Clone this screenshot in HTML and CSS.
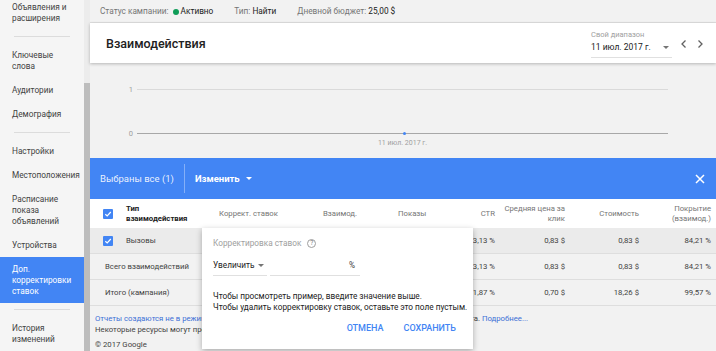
FILE: index.html
```html
<!DOCTYPE html>
<html lang="ru">
<head>
    <meta charset="UTF-8">
    <meta name="viewport" content="width=device-width, initial-scale=1.0">
    <title>Взаимодействия</title>
    <link rel="stylesheet" href="styles.css">
</head>
<body>
<div class="page">
    <nav class="side">
        <ul class="menu">
            <li>Объявления и расширения</li>
            <li class="sep"></li>
            <li>Ключевые слова</li>
            <li>Аудитории</li>
            <li>Демография</li>
            <li class="sep"></li>
            <li>Настройки</li>
            <li>Местоположения</li>
            <li>Расписание показа объявлений</li>
            <li>Устройства</li>
            <li class="on">Доп. корректировки ставок</li>
            <li class="sep"></li>
            <li>История изменений</li>
        </ul>
    </nav>
    <div class="scroll"><div class="thumb"></div></div>

    <main class="main">
        <div class="status">
            <span>Статус кампании: <i class="dot"></i><b>Активно</b></span>
            <span>Тип: <b>Найти</b></span>
            <span>Дневной бюджет: <b>25,00 $</b></span>
        </div>

        <div class="head">
            <h1>Взаимодействия</h1>
            <div class="range">
                <div class="pick">
                    <div class="pick-lbl">Свой диапазон</div>
                    <div class="pick-val">11 июл. 2017 г. <span class="caret"></span></div>
                </div>
                <svg class="nav" width="8" height="10" viewBox="0 0 8 10"><path d="M5.5 1.5 2 5l3.5 3.5" fill="none" stroke="#616161" stroke-width="1.3"/></svg>
                <svg class="nav" width="8" height="10" viewBox="0 0 8 10"><path d="M2.5 1.5 6 5 2.5 8.5" fill="none" stroke="#616161" stroke-width="1.3"/></svg>
            </div>
        </div>

        <div class="chart">
            <div class="crow">
                <span class="clbl">1</span>
                <div class="cline"></div>
            </div>
            <div class="crow zero">
                <span class="clbl">0</span>
                <div class="cline"></div>
            </div>
            <div class="crow">
                <span class="clbl"></span>
                <div class="cdate">11 июл. 2017 г.</div>
            </div>
        </div>

        <div class="selbar">
            <span class="selall">Выбраны все (1)</span>
            <span class="vline"></span>
            <span class="edit">Изменить <span class="caret white"></span></span>
            <svg class="close" width="10" height="10" viewBox="0 0 10 10"><path d="M1 1l8 8M9 1 1 9" stroke="#fff" stroke-width="1.5"/></svg>
        </div>

        <div class="table">
            <div class="row thead">
                <div class="cell"><span class="chk"></span></div>
                <div class="cell bold">Тип<br>взаимодействия</div>
                <div class="cell">Коррект. ставок</div>
                <div class="cell">Взаимод.</div>
                <div class="cell">Показы</div>
                <div class="cell num">CTR</div>
                <div class="cell num">Средняя цена за<br>клик</div>
                <div class="cell num">Стоимость</div>
                <div class="cell num">Покрытие<br>(взаимод.)</div>
            </div>
            <div class="row sel">
                <div class="cell"><span class="chk"></span></div>
                <div class="cell">Вызовы</div>
                <div class="cell"></div>
                <div class="cell"></div>
                <div class="cell"></div>
                <div class="cell num">3,13 %</div>
                <div class="cell num">0,83 $</div>
                <div class="cell num">0,83 $</div>
                <div class="cell num">84,21 %</div>
            </div>
            <div class="row">
                <div class="cell wide">Всего взаимодействий</div>
                <div class="cell num">3,13 %</div>
                <div class="cell num">0,83 $</div>
                <div class="cell num">0,83 $</div>
                <div class="cell num">84,21 %</div>
            </div>
            <div class="row">
                <div class="cell wide">Итого (кампания)</div>
                <div class="cell num">1,87 %</div>
                <div class="cell num">0,70 $</div>
                <div class="cell num">18,26 $</div>
                <div class="cell num">99,57 %</div>
            </div>
        </div>

        <div class="foot">
            <p><a href="#">Отчеты создаются не в режиме реального времени.</a> Часовой пояс для всех дат и часов: время аккаунта. <a href="#">Подробнее...</a></p>
            <p>Некоторые ресурсы могут предоставляться без учета ограничений.</p>
            <p class="copy">© 2017 Google</p>
        </div>

        <div class="popup">
            <div class="pop-title">Корректировка ставок <span class="help">?</span></div>
            <div class="pop-fields">
                <div class="pop-sel">Увеличить <span class="caret"></span></div>
                <div class="pop-input">%</div>
            </div>
            <p class="pop-text">Чтобы просмотреть пример, введите значение выше.<br>Чтобы удалить корректировку ставок, оставьте это поле пустым.</p>
            <div class="pop-btns">
                <span>ОТМЕНА</span>
                <span>СОХРАНИТЬ</span>
            </div>
        </div>
    </main>
</div>
</body>
</html>
```

FILE: styles.css
```css
*{padding: 0; margin: 0; box-sizing: border-box;}
ul{list-style: none;} a{text-decoration: none;}

body{
    font-family: Roboto, "Noto Sans", Arial, sans-serif;
    color: #212121;
    background: #f2f2f2;
    overflow: hidden;
}
.page{
    display: flex;
    width: 716px;
    height: 351px;
    overflow: hidden;
}

/* левое меню */
.side{
    width: 84px;
    flex: none;
    background: #f5f5f5;
    overflow: hidden;
}
.menu{
    margin-top: -5px;
}
.menu li{
    padding: 6.5px 6px 6.5px 12px;
    font-size: 8.25px;
    line-height: 11px;
    color: #424242;
}
.menu li.sep{
    padding: 0;
    height: 1px;
    margin: 6px 14px;
    background: #dcdcdc;
}
.menu li.on{
    background: #4285f4;
    color: #fff;
}
.scroll{
    width: 6px;
    flex: none;
    background: #ececec;
    padding-top: 83px;
    display: flex;
}
.thumb{
    flex: 1;
    background: #bdbdbd;
}

/* основная часть */
.main{
    flex: 1;
    position: relative;
    background: #f2f2f2;
}
.status{
    height: 23px;
    display: flex;
    align-items: center;
    gap: 21px;
    padding-left: 10px;
    font-size: 8.25px;
    color: #757575;
    border-bottom: 1px solid #e0e0e0;
}
.status b{
    font-weight: 400;
    color: #212121;
}
.dot{
    display: inline-block;
    width: 6px;
    height: 6px;
    border-radius: 50%;
    background: #0f9d58;
    margin: 0 2px 0 2px;
    vertical-align: -0.5px;
}
.head{
    height: 40px;
    background: #fff;
    box-shadow: 0 1px 3px rgba(0,0,0,0.25);
    display: flex;
    align-items: center;
    justify-content: space-between;
    padding: 0 12px 0 16px;
    position: relative;
}
.head h1{
    font-size: 12.5px;
    font-weight: 500;
    color: #212121;
}
.range{
    display: flex;
    align-items: center;
    gap: 8px;
}
.pick{
    width: 81px;
    border-bottom: 1px solid #e0e0e0;
    padding-bottom: 5px;
    margin-top: 2px;
}
.pick-lbl{
    font-size: 7.5px;
    color: #9e9e9e;
    margin-bottom: 3px;
}
.pick-val{
    font-size: 8.5px;
    color: #212121;
    display: flex;
    justify-content: space-between;
    align-items: center;
}
.caret{
    display: inline-block;
    width: 0;
    height: 0;
    border-left: 3px solid transparent;
    border-right: 3px solid transparent;
    border-top: 3px solid #757575;
    margin-right: 3px;
}
.caret.white{
    border-top-color: #fff;
    margin-left: 6px;
}
.nav{
    display: block;
    margin-top: 2px;
}

/* график */
.chart{
    height: 95px;
    padding: 21px 48px 0 0;
}
.crow{
    display: flex;
    align-items: center;
    height: 10px;
}
.crow.zero{
    margin-top: 34px;
}
.clbl{
    width: 43px;
    text-align: right;
    font-size: 7.5px;
    color: #9e9e9e;
    margin-right: 4px;
}
.cline{
    flex: 1;
    height: 1px;
    background: #dadada;
    position: relative;
}
.zero .cline{
    background: #a8a8a8;
}
.zero .cline::after{
    content: "";
    position: absolute;
    left: 50%;
    top: -1px;
    width: 3px;
    height: 3px;
    border-radius: 50%;
    background: #4285f4;
}
.cdate{
    flex: 1;
    text-align: center;
    font-size: 7px;
    color: #9e9e9e;
}

/* синяя панель */
.selbar{
    height: 41px;
    background: #4285f4;
    color: #fff;
    display: flex;
    align-items: center;
    padding-left: 10px;
}
.selall{
    font-size: 9.5px;
    color: rgba(255,255,255,0.9);
}
.vline{
    width: 1px;
    height: 29px;
    background: rgba(255,255,255,0.35);
    margin: 0 10px 0 10px;
}
.edit{
    font-size: 9.5px;
    font-weight: 700;
    display: flex;
    align-items: center;
}
.close{
    margin-left: auto;
    margin-right: 11px;
}

/* таблица */
.row{
    display: grid;
    grid-template-columns: 36px 93px 104px 75px 62px 40px 70px 74px 72px;
    align-items: center;
    height: 26px;
    border-bottom: 1px solid #dedede;
    font-size: 7.75px;
    color: #424242;
}
.row.thead{
    height: 29px;
    background: #fff;
    color: #757575;
    border-bottom: none;
    white-space: nowrap;
}
.row.sel{
    background: #ebebeb;
}
.cell.bold{
    font-weight: 700;
    color: #212121;
    line-height: 9.5px;
}
.cell.num{
    text-align: right;
    padding-right: 5px;
    line-height: 9.5px;
}
.cell.wide{
    grid-column: 1 / 6;
    padding-left: 15px;
}
.chk{
    display: block;
    width: 10px;
    height: 10px;
    margin-left: 13px;
    border-radius: 1px;
    background: #4285f4 url("data:image/svg+xml;utf8,<svg xmlns='http://www.w3.org/2000/svg' width='10' height='10'><path d='M2.3 5.2 4.2 7 7.8 3' fill='none' stroke='white' stroke-width='1.2'/></svg>");
}

/* подвал */
.foot{
    padding: 7px 0 0 5px;
    font-size: 7.75px;
    color: #424242;
    line-height: 11px;
    white-space: nowrap;
}
.foot a{
    color: #3b6fd6;
}
.foot .copy{
    margin-top: 4px;
}

/* всплывающее окно */
.popup{
    position: absolute;
    left: 112px;
    top: 228px;
    width: 271px;
    height: 121px;
    background: #fff;
    box-shadow: 0 2px 6px rgba(0,0,0,0.3);
    padding: 10px 11px 0 11px;
}
.pop-title{
    font-size: 8.25px;
    color: #9e9e9e;
    display: flex;
    align-items: center;
    gap: 6px;
}
.help{
    width: 9px;
    height: 9px;
    border: 1px solid #9e9e9e;
    border-radius: 50%;
    font-size: 6.5px;
    line-height: 7px;
    text-align: center;
    color: #757575;
}
.pop-fields{
    display: flex;
    gap: 3px;
    margin-top: 12px;
}
.pop-sel{
    width: 54px;
    font-size: 8.25px;
    color: #212121;
    border-bottom: 1px solid #e0e0e0;
    padding-bottom: 5px;
    display: flex;
    justify-content: space-between;
    align-items: center;
}
.pop-sel .caret{
    margin-right: 3px;
}
.pop-input{
    width: 90px;
    font-size: 8.25px;
    color: #424242;
    text-align: right;
    padding-right: 5px;
    border-bottom: 1px solid #e0e0e0;
    padding-bottom: 5px;
}
.pop-text{
    margin-top: 15px;
    font-size: 8.25px;
    line-height: 10.5px;
    color: #212121;
    white-space: nowrap;
}
.pop-btns{
    display: flex;
    justify-content: flex-end;
    gap: 20px;
    margin-top: 11px;
    padding-right: 6px;
    font-size: 9px;
    font-weight: 500;
    color: #4285f4;
}
```
